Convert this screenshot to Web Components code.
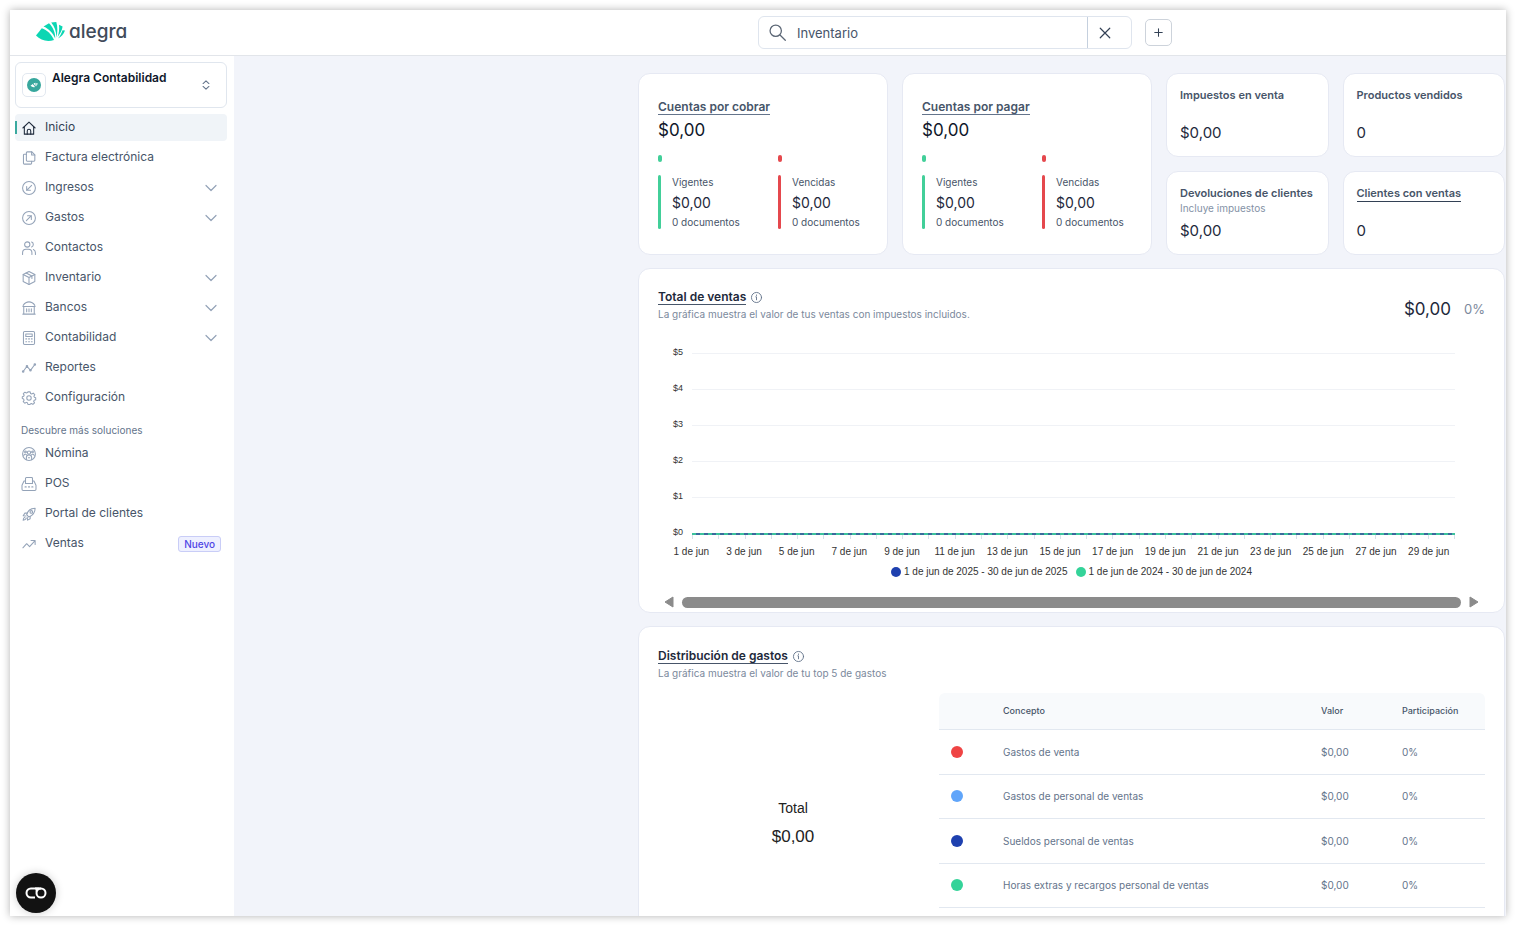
<!DOCTYPE html>
<html lang="es">
<head>
<meta charset="utf-8">
<title>Alegra Contabilidad</title>
<style>
  body { margin: 0; background: #fff; font-family: Inter, "Liberation Sans", sans-serif; color: #334155; }
</style>
</head>
<body>
<alegra-app></alegra-app>

<script>
const define = (name, render) => customElements.define(name, class extends HTMLElement {
  connectedCallback() {
    if (this.shadowRoot) return;
    this.attachShadow({ mode: 'open' }).innerHTML = render(this);
  }
});

const ICONS = {
  home: '<path d="M1.500 12 12 2l10.500 10"/><path d="M4 10v12.500h16V10"/><path d="M9 22.500V17a3 3 0 0 1 6 0v5.500"/>',
  copy: '<path d="M9 1.500h8l5 5V16a1.500 1.500 0 0 1-1.500 1.500H9A1.500 1.500 0 0 1 7.500 16V3A1.500 1.500 0 0 1 9 1.500z"/><path d="M16.500 1.500v5.500H22"/><path d="M7.500 5.500H4A1.500 1.500 0 0 0 2.500 7v14A1.500 1.500 0 0 0 4 22.500h11a1.500 1.500 0 0 0 1.500-1.500v-3.500"/>',
  income: '<circle cx="12" cy="12" r="11"/><path d="M16.500 7.500l-8.500 8.500M8 9.500V16h6.500"/>',
  expense: '<circle cx="12" cy="12" r="11"/><path d="M7.500 16.500L16 8M9.500 8H16v6.500"/>',
  users: '<circle cx="9" cy="6" r="4.500"/><path d="M1 23v-3a6 6 0 0 1 6-6h4a6 6 0 0 1 6 6v3"/><path d="M16.500 1.800a4.500 4.500 0 0 1 0 8.400M19.500 14.500A6 6 0 0 1 23 20v3"/>',
  box: '<path d="M12 1l10 5v12l-10 5-10-5V6z"/><path d="M2 6l10 5 10-5M12 11v12M7 3.500l10 5v4.500"/>',
  bank: '<path d="M2 7.500C5 3 9 1.500 12 1.500S19 3 22 7.500"/><path d="M1.500 9.500h21M3 9.500v13M21 9.500v13M1.500 22.500h21M8 13.500v5M12 13.500v5M16 13.500v5"/>',
  calc: '<rect x="2.500" y="1" width="19" height="22" rx="2"/><path d="M6.500 5h11v4.500h-11z"/><path d="M6.500 13.500h1.500M11.300 13.500h1.500M16 13.500h1.500M6.500 18.500h1.500M11.300 18.500h1.500M16 18.500h1.500"/>',
  report: '<path d="M2 18L8.500 9l6 7L22 6"/><circle cx="2" cy="18" r="1.300"/><circle cx="8.500" cy="9" r="1.300"/><circle cx="14.500" cy="16" r="1.300"/><circle cx="22" cy="6" r="1.300"/>',
  gear: '<circle cx="12" cy="12" r="3.800"/><path d="M10 1.500h4l.7 2.800 2 .8 2.500-1.500 2.700 2.800-1.500 2.500.9 2 2.200.6v3.500l-2.600.8-.9 2 1.500 2.500-2.800 2.700-2.500-1.500-2 .8L13.700 23h-3.500l-.9-2.700-2-.8-2.500 1.500L2.100 18.200l1.500-2.500-.9-2L.5 13V9.800l2.400-.7.8-2-1.500-2.500L5 2l2.400 1.500 2-.8z"/>',
  payroll: '<circle cx="12" cy="12" r="11"/><circle cx="12" cy="9.500" r="2.800"/><circle cx="6" cy="8.500" r="1.500"/><circle cx="18" cy="8.500" r="1.500"/><path d="M7.500 21.500V18a4.500 4.500 0 0 1 9 0v3.500M3 14.500c1-2 3-2.500 4.500-1.500M21 14.500c-1-2-3-2.500-4.500-1.500M11 18.500h2"/>',
  pos: '<path d="M6 11V2.500A1.500 1.500 0 0 1 7.500 1h9A1.500 1.500 0 0 1 18 2.500V11z"/><path d="M6 7H3.500L0 14v7a2 2 0 0 0 2 2h20a2 2 0 0 0 2-2v-7l-3.500-7H18"/><path d="M5.500 17H7M11.300 17h1.500M17 17h1.500" stroke-width="2.400"/>',
  rocket: '<path d="M8 13c1.500-5 6-11 14.500-11C22.500 10.500 17 15 11.500 17z"/><circle cx="16" cy="8.500" r="2.300"/><path d="M9 10.500H5L2 15l5 .5M14 16v4L9.500 22.500 9 17.500M5 17.500c-2 .5-3 2.500-3 5 2.500 0 4.500-1 5-3"/>',
  trend: '<path d="M1.500 18.500l6.500-7 5 5L22 6.500M15.500 6H22.500v7"/>',
  down: '<path d="M2 7l10 10L22 7"/>',
  updown: '<path d="M5 8.500L12 2l7 6.500M5 15.500l7 6.500 7-6.500"/>',
  search: '<circle cx="9.500" cy="9.500" r="8"/><path d="M15.500 15.500L23 23"/>',
  close: '<path d="M2.500 2.500l19 19M21.500 2.500l-19 19"/>',
  plus: '<path d="M12 2v20M2 12h20"/>',
  info: '<circle cx="12" cy="12" r="11"/><path d="M10.500 10.500H12V17M12 6.500v1"/>'
};
define('ui-icon', el => `<style>
  :host { display: inline-block; flex: none; width: 14px; height: 14px; }
  svg { display: block; width: 100%; height: 100%; overflow: visible; fill: none; stroke: currentColor;
        stroke-width: var(--stroke, 1.8); stroke-linecap: round; stroke-linejoin: round; }
</style><svg viewBox="0 0 24 24" aria-hidden="true">${ICONS[el.getAttribute('name')]}</svg>`);

define('alegra-logo', () => `<style>
  :host { display: block; }
  a { display: inline-flex; align-items: center; gap: 4px; color: #414b5a; text-decoration: none; }
  svg { width: 29px; height: 20px; }
  span { font-size: 19px; line-height: 24px; font-weight: 500; font-feature-settings: "cv11"; }
</style>
<a href="#inicio"><svg viewBox="0 0 29 20" fill="#0cd6b3" aria-hidden="true">
  <path d="M0 13.500L5.800 6.200C11 8 15.500 12 18 18C11.500 20.200 4.500 18.500 0 13.500z"/>
  <path d="M7.500 4.500L13 1.200C17 5 19.500 11 19.200 16.500C17 11 12.500 6.500 7.500 4.500z"/>
  <path d="M15.200.6L20.300 0C21.700 5 21.700 10 20.400 15.500C20.300 9.500 18.700 4.500 15.200.6z"/>
  <path d="M23 2.800L26.600 4.500C26.200 8.200 24 12 21.600 15C23 11 23.500 7 23 2.800z"/>
  <path d="M26.500 8.300L29 8.500C27.800 12 25.300 14.800 22 16.500C24 14.200 25.500 11.600 26.500 8.300z"/>
</svg><span>alegra</span></a>`);

define('app-header', () => `<style>
  :host { display: grid; grid-template-columns: 1fr 1fr; align-items: center; height: 45px;
          border-bottom: 1px solid #e2e5ea; background: #fff; }
  alegra-logo { padding-left: 26px; }
  .tools { display: flex; align-items: center; gap: 13px; }
  form { display: flex; align-items: stretch; flex: 0 1 372px; height: 31px; border: 1px solid #dfe5ee; border-radius: 6px; }
  label { flex: 1; display: flex; align-items: center; gap: 11px; padding-left: 10px; color: #5b6675; }
  label ui-icon { width: 17px; height: 17px; }
  input { flex: 1; min-width: 0; border: 0; outline: 0; padding: 0; background: none; color: #475569;
          font: 400 13px/20px Inter, sans-serif; }
  button { display: flex; align-items: center; border: 0; background: none; padding: 0; color: #334155; }
  .clear { width: 44px; padding-left: 11px; border-left: 1px solid #c5d0de; }
  .clear ui-icon { width: 12px; height: 12px; --stroke: 2.400; }
  .add { width: 27px; height: 27px; justify-content: center; border: 1px solid #cdd3db; border-radius: 5px; }
  .add ui-icon { width: 9px; height: 9px; --stroke: 2.800; }
</style>
<alegra-logo></alegra-logo>
<div class="tools">
  <form role="search">
    <label><ui-icon name="search"></ui-icon><input type="text" value="Inventario" aria-label="Buscar"></label>
    <button class="clear" type="button" aria-label="Limpiar"><ui-icon name="close"></ui-icon></button>
  </form>
  <button class="add" type="button" aria-label="Crear"><ui-icon name="plus"></ui-icon></button>
</div>`);

define('nav-item', el => {
  const more = el.hasAttribute('more'), tag = more ? 'button type="button"' : 'a href="#"', end = more ? 'button' : 'a';
  return `<style>
  :host { display: block; color: #94a3b8; }
  a, button { display: flex; align-items: center; box-sizing: border-box; width: 100%; height: 27px; padding: 0 6px 0 7px; border: 0;
      background: none; color: inherit; font: inherit; text-decoration: none; border-radius: 4px; text-align: left; }
  .text { flex: 1; margin: 0 0 2px 9px; color: #475569; font-size: 12px; line-height: 25px; }
  .more { width: 12px; height: 12px; margin-right: 4px; --stroke: 2.400; }
  :host([active]) { color: #1e293b; }
  :host([active]) a { background: #f0f4f8; position: relative; }
  :host([active]) .text { color: #334155; }
  :host([active]) a::before { content: ""; position: absolute; left: 0; top: 7px; width: 2px; height: 13px; background: #3aa99f; }
  </style><${tag}><ui-icon name="${el.getAttribute('icon')}"></ui-icon><span class="text">${el.getAttribute('label')}</span>${
    more ? '<ui-icon class="more" name="down"></ui-icon>' : ''}<slot></slot></${end}>`;
});

define('app-sidebar', () => `<style>
  :host { display: block; box-sizing: border-box; padding: 6px 7px 6px 5px; background: #fff; }
  .product { display: flex; align-items: center; width: 100%; height: 46px; padding: 0 15px 0 6px; background: #fff;
             border: 1px solid #e0e6ee; border-radius: 6px; font: inherit; color: #64748b; }
  .mark { display: flex; align-items: center; justify-content: center; box-sizing: border-box; width: 24px; height: 24px;
          border: 1px solid #e2e8f0; border-radius: 5px; }
  .mark svg { width: 14px; height: 14px; }
  .name { flex: 1; margin: 0 0 14px 6px; text-align: left; font-size: 12px; line-height: 16px; font-weight: 600; color: #0f172a; }
  .product ui-icon { width: 10px; height: 10px; --stroke: 2.600; }
  nav { display: grid; gap: 3px; }
  .first { margin-top: 6px; }
  h2 { margin: 12px 6px 3px; font-size: 10px; line-height: 14px; font-weight: 400; color: #64748b; }
  .new { padding: 0 5px; border: 1px solid #c9cdf7; border-radius: 3px; background: #eef0ff; color: #4f46e5;
         font-size: 10px; line-height: 14px; font-weight: 500; }
</style>
<button class="product" type="button">
  <span class="mark"><svg viewBox="0 0 14 14" aria-hidden="true"><circle cx="7" cy="7" r="7" fill="#37a79d"/>
  <path d="M3.500 7.800L5.800 6l2.200 3Q5.500 9.700 3.500 7.800zM6.500 5.500L8.500 4.800 8.700 8.500zM9.300 5l1.500.5-1.500 3z" fill="#fff"/></svg></span>
  <span class="name">Alegra Contabilidad</span><ui-icon name="updown"></ui-icon>
</button>
<nav class="first" aria-label="Principal">
  <nav-item icon="home" label="Inicio" active></nav-item>
  <nav-item icon="copy" label="Factura electrónica"></nav-item>
  <nav-item icon="income" label="Ingresos" more></nav-item>
  <nav-item icon="expense" label="Gastos" more></nav-item>
  <nav-item icon="users" label="Contactos"></nav-item>
  <nav-item icon="box" label="Inventario" more></nav-item>
  <nav-item icon="bank" label="Bancos" more></nav-item>
  <nav-item icon="calc" label="Contabilidad" more></nav-item>
  <nav-item icon="report" label="Reportes"></nav-item>
  <nav-item icon="gear" label="Configuración"></nav-item>
</nav>
<h2>Descubre más soluciones</h2>
<nav aria-label="Más soluciones">
  <nav-item icon="payroll" label="Nómina"></nav-item>
  <nav-item icon="pos" label="POS"></nav-item>
  <nav-item icon="rocket" label="Portal de clientes"></nav-item>
  <nav-item icon="trend" label="Ventas"><span class="new">Nuevo</span></nav-item>
</nav>`);

define('ui-card', () => `<style>
  :host { display: block; box-sizing: border-box; background: #fff; border: 1px solid #e6e9f3; border-radius: 12px; }
</style><slot></slot>`);

define('account-card', el => {
  const part = (cls, name) => `<div class="part ${cls}"><i></i><dl><dt>${name}</dt><dd>$0,00</dd><dd class="docs">0 documentos</dd></dl></div>`;
  return `<style>
  :host { display: block; }
  ui-card { height: 100%; padding: 26px 19px 25px; }
  h2 { display: flex; margin: 0; font-size: 12px; line-height: 14px; font-weight: 600; }
  a { color: #475569; text-decoration: none; border-bottom: 1px solid #64748b; }
  .amount { margin-top: 5px; font-size: 17px; line-height: 20px; color: #0f172a; }
  .parts { display: grid; grid-template-columns: 4fr 3fr; margin-top: 15px; }
  .part { --c: #42cf99; }
  .late { --c: #e5484d; }
  i { display: block; width: 4px; height: 7px; border-radius: 2px; background: var(--c); }
  dl { position: relative; margin: 13px 0 0; padding-left: 14px; color: #475569; white-space: nowrap; }
  dl::before { content: ""; position: absolute; left: 0; top: 0; bottom: 0; width: 3px; border-radius: 2px; background: var(--c); }
  dt, dd { margin: 0; font-size: 10px; line-height: 15px; }
  dd { font-size: 14px; line-height: 25px; color: #1e293b; }
  .docs { font-size: 10px; line-height: 14px; color: #475569; }
</style>
<ui-card><h2><a href="#">${el.getAttribute('name')}</a></h2><div class="amount">$0,00</div>
<div class="parts">${part('', 'Vigentes')}${part('late', 'Vencidas')}</div></ui-card>`;
});

define('stat-card', el => {
  const name = el.getAttribute('name'), note = el.getAttribute('note');
  return `<style>
  :host { display: block; min-width: 0; }
  ui-card { height: 100%; padding: 14px 13px 13px; }
  .in { display: flex; flex-direction: column; height: 100%; white-space: nowrap; }
  .name { font-size: 11px; line-height: 15px; font-weight: 600; color: #475569; align-self: flex-start; }
  a { color: inherit; text-decoration: none; border-bottom: 1px solid #334155; display: block; }
  .note { font-size: 10px; line-height: 14px; color: #8492a6; }
  .value { margin-top: auto; font-size: 15px; line-height: 20px; color: #1e293b; }
</style>
<ui-card><div class="in"><div class="name">${el.hasAttribute('link') ? `<a href="#">${name}</a>` : name}</div>
${note ? `<div class="note">${note}</div>` : ''}<div class="value">${el.getAttribute('value')}</div></div></ui-card>`;
});

define('panel-title', el => `<style>
  :host { display: block; }
  h2 { display: flex; align-items: center; gap: 5px; margin: 0; font-size: 12px; line-height: 15px; font-weight: 600; height: 16px; }
  a { color: #1e293b; text-decoration: none; border-bottom: 1px solid #475569; }
  ui-icon { width: 11px; height: 11px; color: #64748b; --stroke: 2; }
  p { margin: 2px 0 0; font-size: 10px; line-height: 14px; color: #7b899c; }
</style><h2><a href="#">${el.getAttribute('name')}</a><ui-icon name="info"></ui-icon></h2><p>${el.getAttribute('note')}</p>`);

define('sales-chart', () => {
  const levels = [5, 4, 3, 2, 1].map(n => `<div class="row"><span>$${n}</span><i></i></div>`).join('');
  const days = Array.from({ length: 15 }, (_, i) => `<span>${i * 2 + 1} de jun</span>`).join('');
  return `<style>
  :host { display: block; font-family: "Liberation Sans", Arial, sans-serif; font-size: 10px; color: #333; }
  .row { display: grid; grid-template-columns: 25px 1fr; column-gap: 9px; align-items: start; box-sizing: border-box;
         height: 36px; padding: 11px 30px 0 0; }
  .row span { line-height: 12px; text-align: right; font-size: 9px; }
  .row i { margin-top: 7px; border-top: 1px solid #f0f2f6; }
  .zero { height: 28px; }
  .base { margin-top: 7px; height: 2px; background: repeating-linear-gradient(90deg, #3cc29c 0 4px, #3a6a9c 4px 8px); }
  .ticks { display: grid; grid-template-columns: repeat(29, 1fr); height: 4px; border-right: 1px solid #d8e0ea; }
  .ticks b { border-left: 1px solid #d8e0ea; }
  .days { display: grid; grid-template-columns: repeat(15, 1fr); margin: 2px 30px 0 7px; line-height: 14px; text-align: center; white-space: nowrap; }
  .legend { display: flex; justify-content: center; gap: 8px; margin-top: 6px; line-height: 14px; }
  .legend span { display: flex; align-items: center; gap: 3px; }
  .legend i { width: 10px; height: 10px; border-radius: 50%; background: var(--c); }
  .scroll { display: flex; align-items: center; gap: 8px; height: 16px; margin: 15px 6px 0; }
  .scroll button { padding: 0; border: 0; background: none; width: 10px; height: 12px; }
  .scroll svg { display: block; width: 10px; height: 12px; fill: #8b8b8b; stroke: #8b8b8b; stroke-linejoin: round; }
  .thumb { flex: 1; height: 11px; border-radius: 6px; background: #8b8b8b; }
</style>
${levels}
<div class="row zero"><span>$0</span><div><div class="base"></div><div class="ticks">${'<b></b>'.repeat(29)}</div></div></div>
<div class="days">${days}</div>
<div class="legend"><span style="--c:#1e40af"><i></i>1 de jun de 2025 - 30 de jun de 2025</span><span style="--c:#34d399"><i></i>1 de jun de 2024 - 30 de jun de 2024</span></div>
<div class="scroll"><button type="button" aria-label="Anterior"><svg viewBox="0 0 10 12"><path d="M9 1v10L1 6z"/></svg></button>
<div class="thumb"></div><button type="button" aria-label="Siguiente"><svg viewBox="0 0 10 12"><path d="M1 1v10l8-5z"/></svg></button></div>`;
});

define('expense-table', () => {
  const rows = [['#ef4444', 'Gastos de venta'], ['#60a5fa', 'Gastos de personal de ventas'], ['#1e40af', 'Sueldos personal de ventas'],
    ['#34d399', 'Horas extras y recargos personal de ventas']]
    .map(([c, t]) => `<tr><td><i style="background:${c}"></i></td><td>${t}</td><td>$0,00</td><td>0%</td></tr>`).join('');
  return `<style>
  :host { display: block; }
  table { width: 100%; height: 215px; border-collapse: separate; border-spacing: 0; table-layout: fixed; font-size: 10px; line-height: 14px; }
  th, td { box-sizing: border-box; padding: 0 12px; text-align: left; border-bottom: 1px solid #e2e8f0; white-space: nowrap; }
  th { height: 37px; background: #f8fafc; color: #475569; font-size: 9px; font-weight: 500; }
  th:first-child { border-top-left-radius: 6px; } th:last-child { border-top-right-radius: 6px; }
  td { height: 44px; color: #64748b; }
  .dot { width: 52px; } .value { width: 81px; } .share { width: 95px; }
  i { display: block; width: 12px; height: 12px; border-radius: 50%; }
</style>
<table><thead><tr><th class="dot"></th><th>Concepto</th><th class="value">Valor</th><th class="share">Participación</th></tr></thead>
<tbody>${rows}</tbody></table>`;
});

define('app-dashboard', () => `<style>
  :host { display: block; min-width: 0; box-sizing: border-box; padding: 17px 1px 0 404px; background: #f2f4fa; }
  .page { display: grid; gap: 13px; }
  .top { display: grid; grid-template-columns: 250fr 250fr 339fr; gap: 14px; }
  .stats { display: grid; grid-template-columns: repeat(2, minmax(0, 1fr)); grid-auto-rows: 84px; gap: 14px; }
  .sales { padding: 20px 19px 2px; }
  .head { display: flex; justify-content: space-between; margin-bottom: 14px; }
  .sum { display: flex; align-items: center; gap: 13px; height: 40px; margin-bottom: -8px; color: #1e293b; font-size: 17px; line-height: 20px; }
  .sum small { font-size: 13px; color: #7b899c; }
  .costs { padding: 21px 19px 20px; }
  .split { display: grid; grid-template-columns: 270fr 546fr; column-gap: 11px; min-height: 260px; margin-top: 13px; }
  .total { align-self: center; text-align: center; font-family: "Liberation Sans", Arial, sans-serif; color: #222; font-size: 14px; line-height: 20px; }
  .total strong { display: block; margin-top: 8px; font-size: 17px; line-height: 22px; font-weight: 400; }
</style>
<div class="page">
  <div class="top">
    <account-card name="Cuentas por cobrar"></account-card>
    <account-card name="Cuentas por pagar"></account-card>
    <div class="stats">
      <stat-card name="Impuestos en venta" value="$0,00"></stat-card>
      <stat-card name="Productos vendidos" value="0"></stat-card>
      <stat-card name="Devoluciones de clientes" note="Incluye impuestos" value="$0,00"></stat-card>
      <stat-card name="Clientes con ventas" value="0" link></stat-card>
    </div>
  </div>
  <ui-card class="sales">
    <div class="head"><panel-title name="Total de ventas" note="La gráfica muestra el valor de tus ventas con impuestos incluidos."></panel-title>
    <div class="sum"><span>$0,00</span><small>0%</small></div></div>
    <sales-chart></sales-chart>
  </ui-card>
  <ui-card class="costs">
    <panel-title name="Distribución de gastos" note="La gráfica muestra el valor de tu top 5 de gastos"></panel-title>
    <div class="split"><div class="total">Total<strong>$0,00</strong></div><expense-table></expense-table></div>
  </ui-card>
</div>`);

define('cookie-button', () => `<style>
  :host { display: block; }
  button { display: flex; align-items: center; justify-content: center; width: 40px; height: 40px; padding: 0; border: 0;
           border-radius: 50%; background: #121212; box-shadow: 0 0 8px rgba(0,0,0,.2); }
  svg { width: 22px; height: 12px; fill: none; stroke: #fff; stroke-width: 2; }
</style><button type="button" aria-label="Cookies"><svg viewBox="0 0 22 12"><path d="M10 10.500H6a4.500 4.500 0 0 1 0-9h6.500a4.500 4.500 0 0 0-1 3"/><path d="M10 1.500h6"/><circle cx="16" cy="6" r="4.500"/></svg></button>`);

define('alegra-app', () => `<style>
  :host { display: block; box-sizing: border-box; height: 100vh; padding: 10px; }
  .window { position: relative; display: grid; grid-template: auto minmax(0, 1fr) / 224px minmax(0, 1fr); height: 100%; overflow: hidden; background: #fff; }
  .shade { height: 100%; box-shadow: 0 0 8px rgba(0,0,0,.3); }
  app-header { grid-column: 1 / -1; }
  cookie-button { position: absolute; left: 6px; bottom: 3px; }
</style>
<div class="shade"><div class="window"><app-header></app-header><app-sidebar></app-sidebar><app-dashboard></app-dashboard><cookie-button></cookie-button></div></div>`);
</script>
</body>
</html>
